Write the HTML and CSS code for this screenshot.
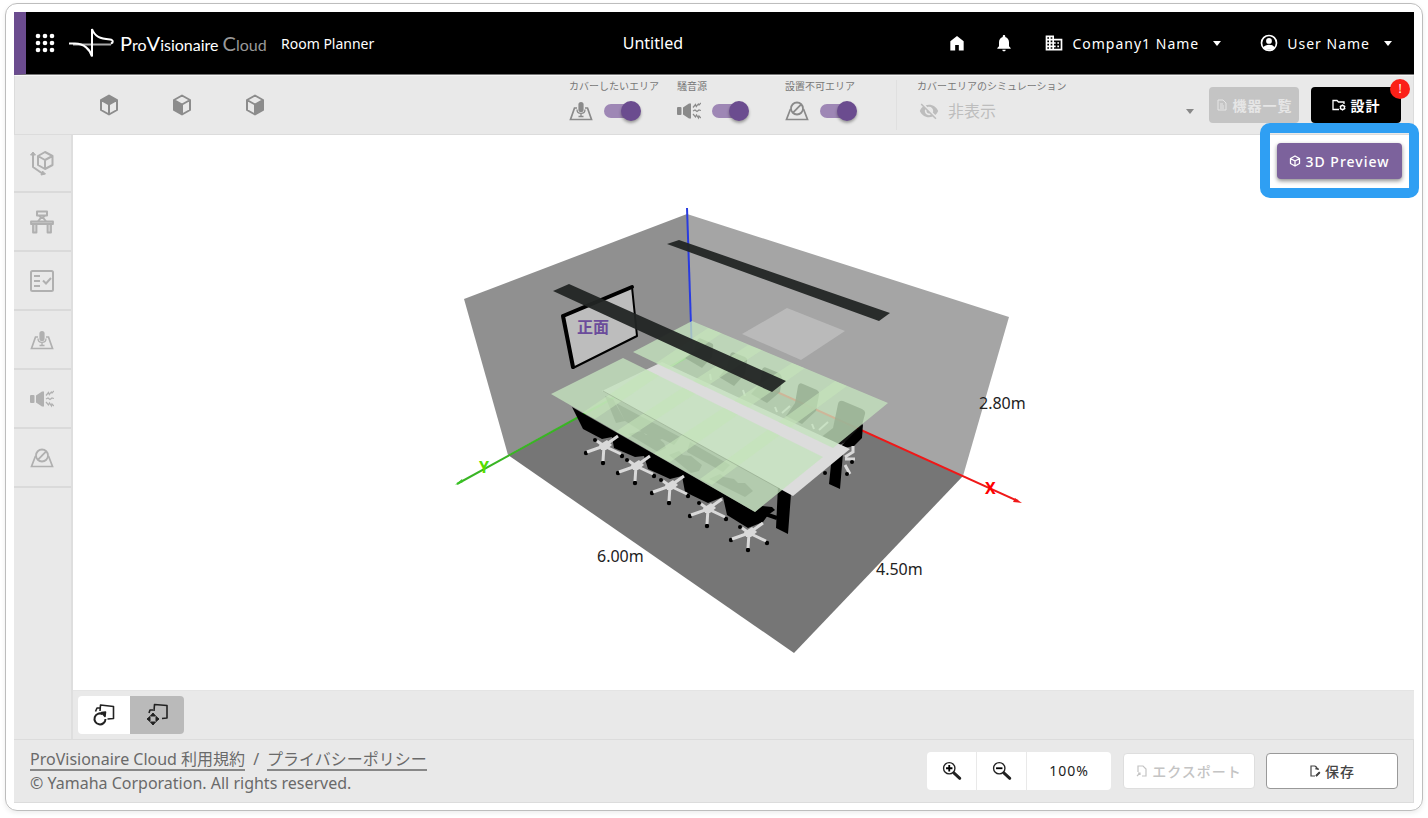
FILE: index.html
```html
<!DOCTYPE html>
<html lang="ja">
<head>
<meta charset="utf-8">
<title>ProVisionaire Cloud Room Planner</title>
<link rel="stylesheet" href="styles.css">
</head>
<body>
<svg class="defs" aria-hidden="true">
  <defs>
    <symbol id="i-mic" viewBox="0 0 24 24"><path d="M8 9H5.500L1.500 20.500h21L18.500 9H16" fill="none" stroke="currentColor" stroke-width="1.700"/><rect x="9.400" y="3" width="5.200" height="10" rx="2.600" fill="currentColor"/><path d="M8 10.500c0 5.200 8 5.200 8 0M12 14.500v3M9.500 17.500h5" fill="none" stroke="currentColor" stroke-width="1.300"/></symbol>
    <symbol id="i-noise" viewBox="0 0 24 24"><rect x="0" y="8" width="4.500" height="8" rx="1" fill="currentColor"/><path d="M6 8.500 12 4.500h2v15h-2L6 15.500z" fill="currentColor"/><path d="m16 8.500 2.500-3 .8 2 2-2.500.7 1 2-2M16 12l2-1 2 1.500 2-1.500 2 .5M16 15l2.500 3 1-2 2 3 .5-2 2 2" fill="none" stroke="currentColor" stroke-width="1.200"/></symbol>
    <symbol id="i-ban" viewBox="0 0 24 24"><path d="M5.500 10 1.500 20.500h21L18.500 10" fill="none" stroke="currentColor" stroke-width="1.700"/><circle cx="12" cy="9.500" r="6" fill="none" stroke="currentColor" stroke-width="1.800"/><path d="m7.800 13.800 8.600-8.600" stroke="currentColor" stroke-width="1.800"/></symbol>
    <symbol id="i-zoom" viewBox="0 0 24 24"><circle cx="9" cy="9" r="6.200" fill="none" stroke="currentColor" stroke-width="1.500"/><path d="m14 14 6.500 6" stroke="currentColor" stroke-width="3.200" stroke-linecap="round"/></symbol>
    <g id="chair-base">
      <circle cx="-18" cy="7" r="2.200"/><circle cx="-1" cy="17" r="2.200"/><circle cx="18" cy="10" r="2.200"/><circle cx="-9" cy="-6" r="2"/>
      <path d="M0 0-17 6M0 0-1 15M0 0 17 8M0 0 14-10M0 0-7-5" fill="none" stroke="#d9d9d9" stroke-width="3"/>
      <path d="m-5-1 8-5 5 5-6 5h-5z" fill="#d9d9d9"/>
    </g>
    <clipPath id="cover"><path d="m633 352 59-31 196 82-55 45zM551 394l72-36 200 99-68 55z"/></clipPath>
  </defs>
</svg>
<div class="frame">
<div class="app">
  <header class="header">
    <button class="plain" aria-label="アプリ一覧"><svg width="20" height="20" viewBox="0 0 20 20" fill="#fff"><circle cx="3" cy="3" r="2.300"/><circle cx="10" cy="3" r="2.300"/><circle cx="17" cy="3" r="2.300"/><circle cx="3" cy="10" r="2.300"/><circle cx="10" cy="10" r="2.300"/><circle cx="17" cy="10" r="2.300"/><circle cx="3" cy="17" r="2.300"/><circle cx="10" cy="17" r="2.300"/><circle cx="17" cy="17" r="2.300"/></svg></button>
    <svg class="mark" width="46" height="32" viewBox="0 0 46 32" aria-hidden="true"><path d="M4 17.500h38" stroke="#aaa" stroke-width="2"/><path d="M0 16.500h6c9 0 15 6 17 13V2c3 8 8 9.500 18 10.500 3.500.5 3.500 3 1 4" fill="none" stroke="#fff" stroke-width="2"/></svg>
    <div class="wordmark"><span class="cap">P</span>ro<span class="cap">V</span>isionaire <span class="dim"><span class="cap">C</span>loud</span></div>
    <div class="product">Room Planner</div>
    <div class="title">Untitled</div>
    <nav class="nav">
      <button class="plain" aria-label="ホーム"><svg width="20" height="20" viewBox="0 0 24 24" fill="#fff"><path d="M9.800 21v-6.500h4.400V21H20V10L12 3.500 4 10v11z"/></svg></button>
      <button class="plain bell" aria-label="通知"><svg width="20" height="20" viewBox="0 0 24 24" fill="#fff"><path d="M12 22c1.100 0 2-.9 2-2h-4c0 1.100.89 2 2 2zm6-6v-5c0-3.070-1.640-5.640-4.500-6.320V4c0-.83-.67-1.500-1.500-1.500s-1.500.67-1.500 1.500v.68C7.630 5.360 6 7.920 6 11v5l-2 2v1h16v-1l-2-2z"/></svg></button>
      <button class="plain account"><svg width="20" height="20" viewBox="0 0 24 24" fill="#fff"><path d="M12 7V3H2v18h20V7H12zM6 19H4v-2h2v2zm0-4H4v-2h2v2zm0-4H4V9h2v2zm0-4H4V5h2v2zm4 12H8v-2h2v2zm0-4H8v-2h2v2zm0-4H8V9h2v2zm0-4H8V5h2v2zm10 12h-8v-2h2v-2h-2v-2h2v-2h-2V9h8v10zm-2-8h-2v2h2v-2zm0 4h-2v2h2v-2z"/></svg>Company1 Name<span class="caret"></span></button>
      <button class="plain account user"><svg width="20" height="20" viewBox="0 0 24 24"><circle cx="12" cy="12" r="9" fill="none" stroke="#fff" stroke-width="2"/><circle cx="12" cy="9.500" r="3.500" fill="#fff"/><path d="M5 17.500c3-4.500 11-4.500 14 0l-3 2.500H8z" fill="#fff"/></svg>User Name<span class="caret"></span></button>
    </nav>
  </header>

  <div class="toolbar">
    <div class="views">
      <button class="plain" aria-label="上面"><svg width="20" height="22" viewBox="0 0 20 22"><path d="M10 1.500 18 6v10l-8 4.500L2 16V6zM2 6l8 4.500L18 6M10 10v10" fill="none" stroke="#8c8c8c" stroke-width="2" stroke-linejoin="round"/><path d="m10 1.500 8 4.500-8 4.500L2 6z" fill="#8c8c8c"/></svg></button>
      <button class="plain" aria-label="正面"><svg width="20" height="22" viewBox="0 0 20 22"><path d="M10 1.500 18 6v10l-8 4.500L2 16V6zM2 6l8 4.500L18 6M10 10v10" fill="none" stroke="#8c8c8c" stroke-width="2" stroke-linejoin="round"/><path d="m2 6 8 4.500v10L2 16z" fill="#8c8c8c"/></svg></button>
      <button class="plain" aria-label="側面"><svg width="20" height="22" viewBox="0 0 20 22"><path d="M10 1.500 18 6v10l-8 4.500L2 16V6zM2 6l8 4.500L18 6M10 10v10" fill="none" stroke="#8c8c8c" stroke-width="2" stroke-linejoin="round"/><path d="m18 6-8 4.500v10l8-4.500z" fill="#8c8c8c"/></svg></button>
    </div>
    <div class="switches">
      <div class="option"><label for="s1">カバーしたいエリア</label><div class="row"><svg width="24" height="24"><use href="#i-mic"/></svg><input id="s1" class="switch" type="checkbox" role="switch" checked></div></div>
      <div class="option"><label for="s2">騒音源</label><div class="row"><svg width="24" height="24"><use href="#i-noise"/></svg><input id="s2" class="switch" type="checkbox" role="switch" checked></div></div>
      <div class="option"><label for="s3">設置不可エリア</label><div class="row"><svg width="24" height="24"><use href="#i-ban"/></svg><input id="s3" class="switch" type="checkbox" role="switch" checked></div></div>
    </div>
    <div class="simulation">
      <label for="sim">カバーエリアのシミュレーション</label>
      <div class="row"><svg width="20" height="20" viewBox="0 0 24 24" fill="#bdbdbd"><path d="M12 7c2.760 0 5 2.240 5 5 0 .65-.13 1.260-.36 1.830l2.920 2.920c1.510-1.260 2.700-2.890 3.430-4.750-1.730-4.390-6-7.500-11-7.500-1.400 0-2.740.25-3.980.7l2.160 2.160C10.740 7.130 11.350 7 12 7zM2 4.270l2.280 2.280.46.46C3.080 8.300 1.780 10.020 1 12c1.730 4.390 6 7.500 11 7.500 1.550 0 3.030-.3 4.380-.84l.42.42L19.730 22 21 20.730 3.270 3 2 4.270zM7.530 9.800l1.550 1.550c-.05.21-.08.43-.08.65 0 1.660 1.340 3 3 3 .22 0 .44-.03.65-.08l1.550 1.550c-.67.33-1.410.53-2.200.53-2.760 0-5-2.240-5-5 0-.79.2-1.530.53-2.200z"/></svg><select id="sim" disabled><option>非表示</option></select><span class="caret"></span></div>
    </div>
    <button class="action muted" disabled><svg width="12" height="12" viewBox="0 0 12 12" fill="none" stroke="currentColor"><path d="M2 1h5l3 3v7H2zM4 5h3M4 7h4M4 9h4"/></svg>機器一覧</button>
    <button class="action dark"><svg width="14" height="12" viewBox="0 0 14 12" fill="none" stroke="currentColor" stroke-width="1.300"><path d="M7 10.500H1v-9h4l1.500 1.500H12v2"/><circle cx="10.500" cy="8.500" r="2"/><path d="M10.500 5.500v1M10.500 10.500v1M13.300 7l-1 .6M7.800 10l1-.6M13.300 10l-1-.6M7.800 7l1 .6"/></svg>設計<span class="badge">!</span></button>
  </div>

  <div class="work">
    <aside class="rail">
      <button aria-label="部屋"><svg width="26" height="26" viewBox="0 0 26 26" fill="none" stroke="currentColor" stroke-width="2" stroke-linejoin="round"><path d="m16 2 7.500 4v9L16 19l-7-4V6zM9 6l7 4 7.500-4M16 10v9M4 3v14l10 7"/><path d="M1.500 5 4 2l2.500 3zM12 25l1.500-4 3 3z" fill="currentColor" stroke-width="1"/></svg></button>
      <button aria-label="家具"><svg width="26" height="26" viewBox="0 0 26 26" fill="none" stroke="currentColor" stroke-width="1.800" stroke-linejoin="round"><path d="M8 2.500h10v4H8zM10 6.500l2 2-3 4m7-6-2 2 3 4M11 9h4" stroke-width="2"/><path d="M2 12.500h22v2.500H2zM4 15h3.500v8.500H4zM18.500 15H22v8.500h-3.500z" fill="#d0d0d0"/></svg></button>
      <button aria-label="設定"><svg width="26" height="26" viewBox="0 0 26 26" fill="none" stroke="currentColor" stroke-width="2"><rect x="2" y="3" width="22" height="20" rx="1.500"/><path d="M5 8h6M5 13h6M5 18h6M14 12.500l3 3 5-5.500"/></svg></button>
      <button aria-label="カバーしたいエリア"><svg width="24" height="24"><use href="#i-mic"/></svg></button>
      <button aria-label="騒音源"><svg width="24" height="24"><use href="#i-noise"/></svg></button>
      <button aria-label="設置不可エリア"><svg width="24" height="24"><use href="#i-ban"/></svg></button>
    </aside>
    <main class="stage">
      <div class="canvas">
        <svg class="scene" viewBox="73 135 1341 555" role="img" aria-label="会議室の3Dビュー">
          <path d="m464 299 223-85 6 140-185 101z" fill="#909090"/>
          <path d="m687 214 322 103-46 159-270-122z" fill="#a5a5a5"/>
          <path d="m508 455 185-101 270 122-169 177z" fill="#767676"/>
          <path d="m787 308 58 23-44 29-59-26z" fill="#bababa"/>
          <path d="m457 484 236-130" stroke="#39b524" stroke-width="2"/>
          <path d="m455 485 7-6 1 3z" fill="#39c524"/>
          <path d="m693 354 325 147" stroke="#f01818" stroke-width="2"/>
          <path d="m1022 503-9-1 2-4z" fill="#f01818"/>
          <path d="m687 208 5 146" stroke="#293be0" stroke-width="2"/>

          <!-- far row of chairs -->
          <path d="M838 404q1-4 5-3l19 8q4 2 3 5l-6 22-26 12-13-10 13-10zM798 386q1-4 5-2l14 6q3 2 2 5l-3 16-14 13-16-8 9-13zM762 370q1-4 5-2l12 5q3 2 3 5l-2 14-13 11-16-9 9-10zM730 355q1-4 5-2l10 4q3 2 2 4l-2 13-11 12-15-9 8-10zM697 341q1-4 5-2l9 4q3 1 2 4l-1 10-10 11-17-10 9-7z" fill-opacity=".85"/>
          <path d="m828 422-9 8m-7-6 2 5m-24-23-8 7m-7-6 2 5m-34-22 2 6m-35-22 1 6" fill="none" stroke="#d9d9d9" stroke-width="2"/>
          <path d="m839 448 24-24-1 14-8 8-10 2z"/>
          <path d="m845 457 8-5v-6m-8 13h10m-10 6 5 9" fill="none" stroke="#d9d9d9" stroke-width="3"/>
          <circle cx="852" cy="462" r="2"/><circle cx="847" cy="474" r="2"/><circle cx="825" cy="473" r="2"/>

          <!-- near row of chairs -->
          <path d="m572 407 11 22 19 10 10-2 2 11 21 9 9-1 4 13 22 10 12-3 3 16 23 11 15-6 4 18 21 13 15-6 5-7 7-5-3-3-10-1-7 6z"/>
          <path d="m605 396 8 3 12 22-9 2zM616 403l64 34-6 8-12-6-5 2-32-20zM628 434l14-3 4 4 7-1 11 9 2 5-8 4zM669 455l10-4 4 4 8 1 11 9-3 6-8 2zM690 442l40 23-7 7-36-20zM709 479l11-5 4 3 10 2 4 4 7 0 8 8-8 6z" fill-opacity=".6"/>
          <path d="m762 513 15 5" stroke="#000" stroke-width="4"/>
          <use href="#chair-base" x="604" y="446"/>
          <use href="#chair-base" x="636" y="466"/>
          <use href="#chair-base" x="670" y="486"/>
          <use href="#chair-base" x="708" y="509"/>
          <use href="#chair-base" x="749" y="533"/>
          <path d="m778 486 13 8-3 40-12-6zM832 455l11-2-3 36-11-5z"/>
          <path d="m602 391 60-29 188 87-57 47z" fill="#dcdcdc"/>

          <path d="m633 352 59-31 196 82-55 45z" fill="#c4e3be" fill-opacity=".78"/>
          <path d="m551 394 72-36 200 99-68 55z" fill="#c4e3be" fill-opacity=".78"/>
          <path clip-path="url(#cover)" d="m582 413 13 6 127-86-14-5zM615 432l13 6 134-88-14-5zM653 454l17 8 135-94-13-5zM700 479l12 6 135-99-12-5z" fill="#c5e4b9" fill-opacity=".6"/>
          <path d="m603 391 177 98" fill="none" stroke="#879c80" stroke-opacity=".5"/>

          <path d="m563 316 69-29 5 49-64 32z" fill="#bdbdbd" stroke="#000" stroke-width="2" stroke-linejoin="round"/>
          <path d="m563 316 10 51M563 316l69-29" stroke="#000" stroke-width="4" stroke-linecap="round"/>
          <path d="m667 244 12-4 211 73-11 8zM553 291l16-7 217 97-14 11z" fill="#222524" fill-opacity=".95"/>
          <text class="front" x="577" y="333">正面</text>
          <text class="axis y" x="479" y="473">Y</text>
          <text class="axis x" x="985" y="494">X</text>
          <text class="dimension" x="979" y="409">2.80m</text>
          <text class="dimension" x="597" y="562">6.00m</text>
          <text class="dimension" x="876" y="575">4.50m</text>
        </svg>
        <div class="callout"><button class="preview"><svg width="12" height="12" viewBox="0 0 12 12" fill="none" stroke="currentColor" stroke-width="1.300" stroke-linejoin="round"><path d="m6 1 4.500 2.500v5L6 11 1.500 8.500v-5zM1.500 3.500 6 6l4.500-2.500M6 6v5"/></svg>3D Preview</button></div>
      </div>
      <div class="modes">
        <button aria-label="回転"><svg width="24" height="24" viewBox="0 0 24 24" fill="none" stroke="#222" stroke-width="1.600" stroke-linejoin="round"><path d="m8 8 .5-6 13 1.500V15.500l-6 .5M8 5H5L3.500 8.500"/><path d="M10.500 11a5.500 5.500 0 1 0 3 5" stroke-width="2"/><path d="m9.500 9.500 4-.5-.5 4.500z" fill="#222"/></svg></button>
        <button class="on" aria-label="移動"><svg width="24" height="24" viewBox="0 0 24 24" fill="none" stroke="#222" stroke-width="1.600" stroke-linejoin="round"><path d="m9 8 .5-6.500 12.500 1V15l-5 .5M8 7H5L4 10"/><path d="m8 10 2.500 3h-5zM8 22l2.500-3h-5zM2 16l3-2.500v5zM14 16l-3-2.500v5z" fill="#222" stroke-width="1"/></svg></button>
      </div>
    </main>
  </div>

  <footer class="footer">
    <div class="legal">
      <div><a href="#">ProVisionaire Cloud 利用規約</a><span class="slash">/</span><a href="#">プライバシーポリシー</a></div>
      <div>© Yamaha Corporation. All rights reserved.</div>
    </div>
    <div class="zoom">
      <button aria-label="拡大"><svg width="22" height="22" viewBox="0 0 24 24"><use href="#i-zoom"/><path d="M5.500 9h7M9 5.500v7" stroke="#000" stroke-width="2"/></svg></button>
      <button aria-label="縮小"><svg width="22" height="22" viewBox="0 0 24 24"><use href="#i-zoom"/><path d="M5.500 9h7" stroke="#000" stroke-width="2"/></svg></button>
      <output>100%</output>
    </div>
    <button class="file" disabled><svg width="12" height="12" viewBox="0 0 12 12" fill="none" stroke="currentColor" stroke-width="1.200"><path d="M2 7V1h5l3 3v7H6M1 11l3-3M2 8h2v2"/></svg>エクスポート</button>
    <button class="file save"><svg width="12" height="12" viewBox="0 0 12 12" fill="none" stroke="currentColor" stroke-width="1.200"><path d="M6 11H2V1h4l3 3v1M7 1v3h3M7 11l4-4"/><path d="m7 11 3.500-3.500" stroke-width="2"/></svg>保存</button>
  </footer>
</div>
</div>
</body>
</html>
```
FILE: styles.css
```css
* { box-sizing: border-box; }
body {
  margin: 0;
  min-height: 100vh;
  padding: 3px 5px 7px;
  display: flex;
  background: #fff;
  font-family: "Noto Sans", "Noto Sans CJK JP", sans-serif;
  font-size: 16px;
  color: #222;
}
button, select { font: inherit; color: inherit; margin: 0; }
button { display: flex; align-items: center; justify-content: center; border: 0; padding: 0; }
svg { display: block; flex: none; }
.defs { position: absolute; width: 0; height: 0; }
.plain { background: none; }

.frame {
  flex: 1;
  display: flex;
  border: 1px solid #bdbdbd;
  border-radius: 12px;
  padding: 8px 8px 7px;
  box-shadow: 0 2px 5px rgba(0, 0, 0, .08);
}
.app { flex: 1; min-width: 0; display: flex; flex-direction: column; background: #e9e9e9; }

.header {
  height: 63px;
  display: flex;
  align-items: center;
  background: #000;
  border-left: 12px solid #6b4c8f;
  border-bottom: 1px solid #777;
  padding: 0 22px 0 9px;
  color: #fff;
}
.mark { margin-left: 14px; }
.wordmark {
  width: 150px;
  margin-left: 5px;
  font-family: Lato, sans-serif;
  font-size: 16px;
  white-space: nowrap;
}
.cap { font-size: 20px; }
.dim { color: #999; }
.product { margin-left: 11px; font-size: 14px; }
.title { flex: 1; text-align: center; padding-right: 16px; }
.nav { display: flex; align-items: center; }
.bell { margin-left: 27px; }
.account { margin-left: 30px; gap: 8px; font-size: 14px; letter-spacing: 1px; }
.user { margin-left: 38px; }
.caret { border: 4px solid transparent; border-top: 5px solid currentColor; border-bottom: 0; }
.account .caret { margin-left: 6px; }

.toolbar {
  height: 60px;
  display: flex;
  align-items: center;
  padding-right: 12px;
  border: 1px solid #dcdcdc;
  border-top-color: #f8f8f8;
}
.views { display: flex; gap: 53px; margin-left: 84px; margin-right: auto; }
.switches { display: flex; color: #8a8a8a; }
.option { width: 108px; }
.option label, .simulation label { display: block; font-size: 10px; line-height: 12px; color: #777; white-space: nowrap; }
.row { display: flex; align-items: center; height: 38px; }
.switch {
  appearance: none;
  position: relative;
  width: 34px;
  height: 14px;
  margin: 0 0 0 11px;
  border-radius: 7px;
  background: #9e87b5;
}
.switch::before {
  content: "";
  position: absolute;
  top: -3px;
  right: -3px;
  width: 20px;
  height: 20px;
  border-radius: 50%;
  background: #6b4c8f;
  box-shadow: 0 2px 3px rgba(0, 0, 0, .35);
}
.simulation { width: 313px; padding: 0 15px 0 20px; margin-left: 3px; border-left: 1px solid #e0e0e0; }
.simulation .row { padding-left: 2px; }
.simulation .caret { color: #888; }
select { appearance: none; flex: 1; min-width: 0; border: 0; padding: 0 0 0 9px; background: none; color: #bdbdbd; opacity: 1; }
select:disabled { color: #bdbdbd; opacity: 1; }
.action {
  width: 90px;
  height: 36px;
  gap: 5px;
  border-radius: 4px;
  font-size: 14px;
  font-weight: 700;
  letter-spacing: 1px;
}
.muted { background: #c4c4c4; color: #e6e6e6; }
.dark { position: relative; margin-left: 12px; background: #000; color: #fff; }
.badge {
  position: absolute;
  top: -8px;
  right: -9px;
  width: 20px;
  height: 20px;
  border-radius: 50%;
  background: #fb2018;
  font-size: 12px;
  line-height: 20px;
  font-weight: 400;
  letter-spacing: 0;
}

.work { flex: 1; display: flex; min-height: 500px; }
.rail { width: 59px; border-right: 2px solid #dedede; }
.rail button { width: 100%; height: 59px; padding-right: 2px; border-bottom: 2px solid #dadada; background: none; color: #b0b0b0; }
.rail button:first-child { height: 58px; }
.stage { flex: 1; min-width: 0; display: flex; flex-direction: column; }
.canvas { position: relative; flex: 1; min-height: 0; background: #fff; }
.scene { position: absolute; inset: 0; width: 100%; height: 100%; }
.front { font-size: 16px; font-weight: 700; fill: #6b4c9b; }
.axis { font-size: 16px; font-weight: 700; }
.axis.x { fill: #f00; }
.axis.y { fill: #5d0; }
.dimension { font-size: 16px; fill: #222; }
.callout {
  position: absolute;
  top: -12px;
  right: -5px;
  border: 10px solid #2f9ff3;
  border-radius: 10px;
  padding: 10px 7px 9px;
}
.preview {
  width: 125px;
  height: 36px;
  gap: 4px;
  border-radius: 4px;
  background: #7c629c;
  color: #fff;
  font-size: 14px;
  font-weight: 500;
  letter-spacing: 1px;
  box-shadow: 0 2px 4px rgba(0, 0, 0, .45);
}
.modes { height: 49px; display: flex; padding: 5px; border-top: 1px solid #e4e4e4; }
.modes button { width: 52px; height: 38px; background: #fff; border-radius: 4px 0 0 4px; }
.modes .on { width: 54px; background: #bababa; border-radius: 0 4px 4px 0; }

.footer { display: flex; align-items: center; height: 64px; padding: 0 15px 1px 16px; border: 1px solid #dcdcdc; border-left-width: 0; }
.legal { margin-right: auto; font-size: 16px; line-height: 24px; color: #6a6a6a; white-space: nowrap; }
.legal a { display: inline-block; line-height: 20px; color: inherit; text-decoration: none; border-bottom: 2px solid #888; }
.slash { margin: 0 8px; }
.zoom { display: flex; height: 38px; margin-right: 12px; border-radius: 4px; background: #fff; font-size: 14px; }
.zoom button { width: 50px; background: none; border-right: 1px solid #e9e9e9; }
.zoom output { width: 84px; line-height: 38px; text-align: center; letter-spacing: 1px; }
.file {
  width: 132px;
  height: 36px;
  gap: 4px;
  border: 1px solid #dedede;
  border-radius: 4px;
  background: #fff;
  color: #c4c4c4;
  font-size: 14px;
  font-weight: 500;
  letter-spacing: 1px;
}
.save { margin-left: 11px; border-color: #999; color: #444; }
```
